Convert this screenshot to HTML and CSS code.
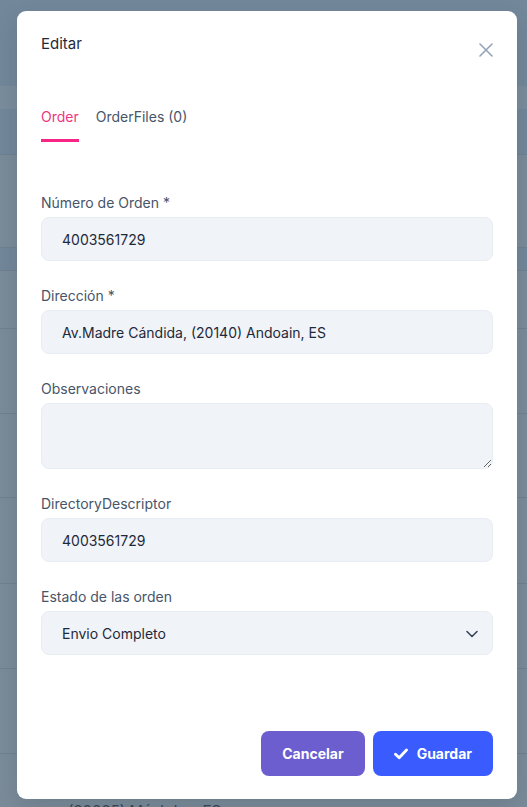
FILE: index.html
```html
<!DOCTYPE html>
<html lang="es">
<head>
<meta charset="utf-8">
<title>Editar</title>
<link rel="stylesheet" href="styles.css">
</head>
<body>
<div class="page">
  <div class="bg-top"></div>
  <div class="bg-strip light"></div>
  <div class="bg-strip dark h45"></div>
  <div class="bg-row h93"></div>
  <div class="bg-strip dark h23"></div>
  <div class="bg-row h58"></div>
  <div class="bg-row h85"></div>
  <div class="bg-row h84"></div>
  <div class="bg-row h86"></div>
  <div class="bg-row h85"></div>
  <div class="bg-row h85"></div>
  <div class="bg-row h85 last"><span class="bg-text">(20025) Móstoles, ES</span></div>
</div>

<div class="modal">
  <div class="modal-header">
    <h2 class="modal-title">Editar</h2>
    <button class="close-btn" aria-label="Cerrar">
      <svg width="14" height="14" viewBox="0 0 14 14"><path d="M1 1L13 13M13 1L1 13" stroke="#94a3b8" stroke-width="1.6" stroke-linecap="round"/></svg>
    </button>
  </div>

  <div class="tabs">
    <span class="tab active">Order</span>
    <span class="tab">OrderFiles (0)</span>
  </div>

  <form class="form">
    <div class="field">
      <label class="label">Número de Orden *</label>
      <input class="input" type="text" value="4003561729">
    </div>
    <div class="field">
      <label class="label">Dirección *</label>
      <input class="input" type="text" value="Av.Madre Cándida, (20140) Andoain, ES">
    </div>
    <div class="field">
      <label class="label">Observaciones</label>
      <textarea class="input textarea"></textarea>
    </div>
    <div class="field">
      <label class="label">DirectoryDescriptor</label>
      <input class="input" type="text" value="4003561729">
    </div>
    <div class="field">
      <label class="label">Estado de las orden</label>
      <div class="select-wrap">
        <select class="input select"><option>Envio Completo</option></select>
        <svg class="chevron" width="12" height="8" viewBox="0 0 12 8"><path d="M1 1.5L6 6.5L11 1.5" fill="none" stroke="#334155" stroke-width="1.5" stroke-linecap="round" stroke-linejoin="round"/></svg>
      </div>
    </div>
  </form>

  <div class="footer">
    <button class="btn btn-cancel">Cancelar</button>
    <button class="btn btn-save">
      <svg width="14" height="12" viewBox="0 0 14 12"><path d="M1.5 6.2L5.2 9.8L12.5 2" fill="none" stroke="#fff" stroke-width="2.8" stroke-linecap="round" stroke-linejoin="round"/></svg>
      <span>Guardar</span>
    </button>
  </div>
</div>
</body>
</html>
```

FILE: styles.css
```css
* { box-sizing: border-box; }
html, body { margin: 0; padding: 0; }
body {
  width: 527px;
  height: 807px;
  overflow: hidden;
  font-family: Inter, "Noto Sans", sans-serif;
  background: #7a8b99;
  position: relative;
}

.page { display: flex; flex-direction: column; }
.bg-top { height: 86px; background: #72879a; }
.bg-strip.light { height: 23px; background: #7a8d9c; }
.bg-strip.dark { background: #72879a; }
.h45 { height: 45px; }
.h23 { height: 23px; }
.h58 { height: 58px; }
.h84 { height: 84px; }
.h85 { height: 85px; }
.h86 { height: 86px; }
.h93 { height: 93px; }
.bg-row { background: #7a8b99; border-top: 1px solid #6f8190; }
.bg-strip.dark.h23 { border-top: 1px solid #6f8190; }
.bg-row.last { padding: 46px 0 0 68px; }
.bg-text { font-size: 15px; color: #3a4756; line-height: 20px; }

.modal {
  position: absolute;
  top: 11px;
  left: 17px;
  width: 500px;
  height: 788px;
  background: #fff;
  border-radius: 9px;
  padding: 20px 24px 23px;
  display: flex;
  flex-direction: column;
  box-shadow: 0 10px 25px rgba(15, 23, 42, 0.12);
}

.modal-header {
  display: flex;
  justify-content: space-between;
  align-items: flex-start;
}
.modal-title {
  margin: 0;
  font-size: 15px;
  line-height: 25px;
  font-weight: 400;
  color: #1e293b;
}
.close-btn {
  margin: 12px 0 0 0;
  padding: 0;
  border: 0;
  background: none;
  width: 14px;
  height: 14px;
  display: flex;
}

.tabs {
  display: flex;
  gap: 17px;
  margin-top: 50px;
}
.tab {
  font-size: 14px;
  line-height: 20px;
  color: #475569;
  padding-bottom: 12px;
  border-bottom: 3px solid transparent;
}
.tab.active {
  color: #f2347f;
  border-bottom-color: #f72585;
}

.form {
  margin-top: 51px;
  display: flex;
  flex-direction: column;
  gap: 25px;
}
.field { display: flex; flex-direction: column; gap: 4px; }
.label {
  font-size: 14px;
  line-height: 20px;
  color: #475569;
}
.input {
  width: 100%;
  height: 44px;
  border: 1px solid #e8edf3;
  background: #f0f3f7;
  border-radius: 8px;
  padding: 0 20px;
  font-family: Inter, "Noto Sans", sans-serif;
  font-size: 14px;
  color: #1e293b;
  outline: none;
}
.textarea {
  height: 66px;
  padding: 10px 20px;
  resize: vertical;
  display: block;
}
.select-wrap { position: relative; }
.select {
  appearance: none;
  -webkit-appearance: none;
  display: block;
}
.chevron {
  position: absolute;
  right: 15px;
  top: 19px;
}

.footer {
  margin-top: auto;
  display: flex;
  justify-content: flex-end;
  gap: 8px;
}
.btn {
  height: 45px;
  border: 0;
  border-radius: 8px;
  padding: 0 21px;
  font-family: Inter, "Noto Sans", sans-serif;
  font-size: 14px;
  font-weight: 700;
  color: #fff;
  display: flex;
  align-items: center;
  gap: 9px;
}
.btn-cancel { background: #6c5ecf; }
.btn-save { background: #3a5cff; }
```
